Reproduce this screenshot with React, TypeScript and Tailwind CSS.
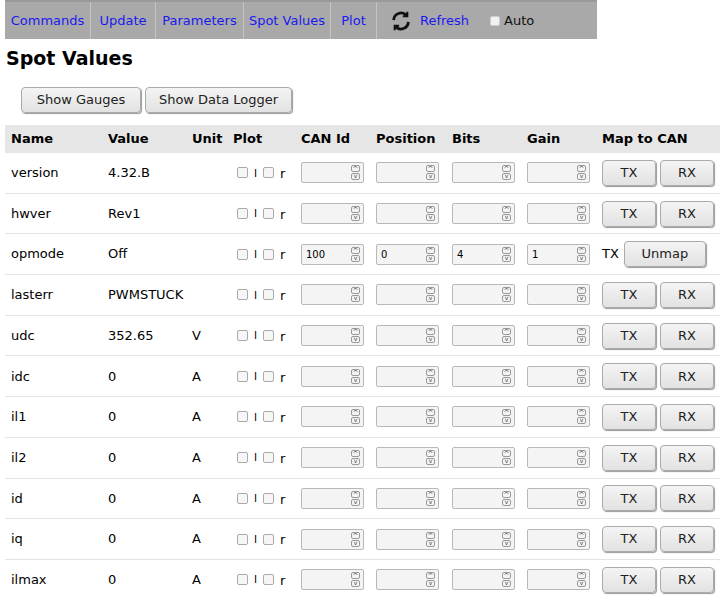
import React from "react";

const rows: [string, string, string][] = [
  ["version", "4.32.B", ""],
  ["hwver", "Rev1", ""],
  ["opmode", "Off", ""],
  ["lasterr", "PWMSTUCK", ""],
  ["udc", "352.65", "V"],
  ["idc", "0", "A"],
  ["il1", "0", "A"],
  ["il2", "0", "A"],
  ["id", "0", "A"],
  ["iq", "0", "A"],
  ["ilmax", "0", "A"],
];

const grid = "grid grid-cols-[97px_84px_41px_68px_75px_76px_75px_75px_124px]";

function Spin({ v }: { v?: string }) {
  return (
    <div className="w-[63px] h-[21px] border border-[#b8b8b8] rounded-[2px] bg-[#f4f4f4] flex items-center text-[10px] pl-[4px] relative">
      <span>{v}</span>
      <div className="absolute right-[3px] top-[2px] flex flex-col gap-[1px]">
        <div className="w-[9px] h-[7px] border border-[#999] rounded-[2px] text-[7px] leading-[7px] text-center text-[#444]">^</div>
        <div className="w-[9px] h-[7px] border border-[#999] rounded-[2px] text-[6px] leading-[4px] text-center text-[#444]">v</div>
      </div>
    </div>
  );
}

function Btn({ children, w }: { children: React.ReactNode; w: string }) {
  return (
    <button className={`${w} h-[26px] border border-[#aaa] rounded-[4px] bg-gradient-to-b from-[#f4f4f4] to-[#e2e2e2] shadow-[1px_1px_1px_#999] text-[13px] text-[#222]`}>
      {children}
    </button>
  );
}

function Cb() {
  return <span className="inline-block w-[11px] h-[11px] border border-[#aaa] rounded-[2px] bg-[#f6f6f6]" />;
}

const navItems: [string, string][] = [
  ["Commands", "w-[86px]"],
  ["Update", "w-[65px]"],
  ["Parameters", "w-[88px]"],
  ["Spot Values", "w-[87px]"],
  ["Plot", "w-[46px]"],
];

export default function App() {
  return (
    <div className="w-[726px] h-[599px] bg-white text-[13px] text-black overflow-hidden" style={{ fontFamily: "'DejaVu Sans', sans-serif" }}>
      <div className="ml-[5px] w-[592px] h-[39px] bg-[#a9a9a9] border-t-2 border-[#999] flex items-center">
        {navItems.map(([n, w]) => (
          <div key={n} className={`${w} h-full flex items-center justify-center whitespace-nowrap text-[#1a1aee] border-r border-[#c4c4c4]`}>{n}</div>
        ))}
        <div className="flex items-center pl-[12px] gap-[7px] whitespace-nowrap">
          <svg width="24" height="22" viewBox="0 0 24 24" fill="none" stroke="#111" strokeWidth="3">
            <path d="M4 11a8 8 0 0 1 14-5" />
            <path d="M20 13a8 8 0 0 1-14 5" />
            <path d="M19 2v5h-5" fill="#111" strokeWidth="2" />
            <path d="M5 22v-5h5" fill="#111" strokeWidth="2" />
          </svg>
          <span className="text-[#1a1aee]">Refresh</span>
          <span className="ml-[14px] w-[10px] h-[10px] bg-[#f2f2f2] border border-[#ccc] rounded-[2px]" />
          <span className="text-[#111] -ml-[3px]">Auto</span>
        </div>
      </div>
      <h1 className="text-[19px] font-bold ml-[6px] mt-[7px] leading-[25px]">Spot Values</h1>
      <div className="flex gap-[4px] ml-[21px] mt-[16px]">
        <Btn w="w-[120px]">Show Gauges</Btn>
        <Btn w="w-[147px]">Show Data Logger</Btn>
      </div>
      <div className="ml-[5px] mt-[12px] w-[715px]">
        <div className={`${grid} bg-[#e6e6e6] h-[28px] items-center font-bold`}>
          {["Name", "Value", "Unit", "Plot", "CAN Id", "Position", "Bits", "Gain", "Map to CAN"].map((h) => (
            <div key={h} className="pl-[6px]">{h}</div>
          ))}
        </div>
        {rows.map(([n, v, u]) => (
          <div key={n} className={`${grid} h-[40.7px] items-center border-b border-[#e4e4e4]`}>
            <div className="pl-[6px]">{n}</div>
            <div className="pl-[6px]">{v}</div>
            <div className="pl-[6px]">{u}</div>
            <div className="pl-[10px] flex items-center gap-[6px]">
              <Cb /><span className="text-[11px] mt-[2px]">l</span><Cb /><span className="mt-[2px]">r</span>
            </div>
            {n === "opmode" ? (
              <>
                <div className="pl-[6px]"><Spin v="100" /></div>
                <div className="pl-[6px]"><Spin v="0" /></div>
                <div className="pl-[6px]"><Spin v="4" /></div>
                <div className="pl-[6px]"><Spin v="1" /></div>
                <div className="pl-[6px] flex items-center gap-[5px]">TX <Btn w="w-[82px]">Unmap</Btn></div>
              </>
            ) : (
              <>
                <div className="pl-[6px]"><Spin /></div>
                <div className="pl-[6px]"><Spin /></div>
                <div className="pl-[6px]"><Spin /></div>
                <div className="pl-[6px]"><Spin /></div>
                <div className="pl-[6px] flex gap-[4px]"><Btn w="w-[54px]">TX</Btn><Btn w="w-[54px]">RX</Btn></div>
              </>
            )}
          </div>
        ))}
      </div>
    </div>
  );
}
